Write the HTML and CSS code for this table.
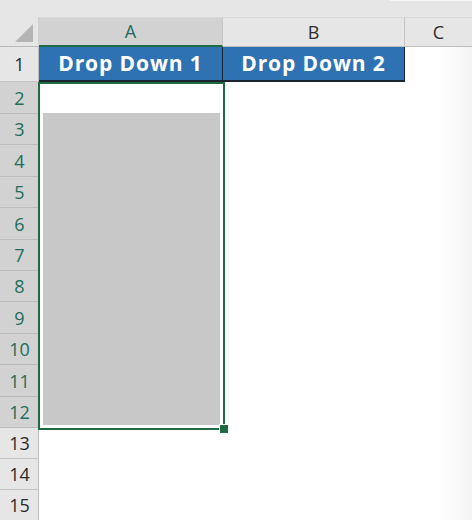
FILE: index.html
```html
<!DOCTYPE html>
<html>
<head>
<meta charset="utf-8">
<link rel="stylesheet" href="styles.css">
</head>
<body>
<div class="sheet">
  <div class="topbar"><div class="topbar-fill"></div><div class="topbar-light"></div></div>
  <div class="grid">
    <div class="corner"><span class="tri"></span></div>
    <div class="colhead sel">A</div>
    <div class="colhead">B</div>
    <div class="colhead last">C</div>

    <div class="rowhead">1</div>
    <div class="cell title">Drop Down 1</div>
    <div class="cell title">Drop Down 2</div>
    <div class="cell"></div>

    <div class="rowhead sel h32">2</div><div class="cell"></div><div class="cell"></div><div class="cell"></div>
    <div class="rowhead sel h31">3</div><div class="cell"></div><div class="cell"></div><div class="cell"></div>
    <div class="rowhead sel h32">4</div><div class="cell"></div><div class="cell"></div><div class="cell"></div>
    <div class="rowhead sel h31">5</div><div class="cell"></div><div class="cell"></div><div class="cell"></div>
    <div class="rowhead sel h32">6</div><div class="cell"></div><div class="cell"></div><div class="cell"></div>
    <div class="rowhead sel h31">7</div><div class="cell"></div><div class="cell"></div><div class="cell"></div>
    <div class="rowhead sel h31">8</div><div class="cell"></div><div class="cell"></div><div class="cell"></div>
    <div class="rowhead sel h32">9</div><div class="cell"></div><div class="cell"></div><div class="cell"></div>
    <div class="rowhead sel h31">10</div><div class="cell"></div><div class="cell"></div><div class="cell"></div>
    <div class="rowhead sel h32">11</div><div class="cell"></div><div class="cell"></div><div class="cell"></div>
    <div class="rowhead sel h31">12</div><div class="cell"></div><div class="cell"></div><div class="cell"></div>
    <div class="rowhead">13</div><div class="cell"></div><div class="cell"></div><div class="cell"></div>
    <div class="rowhead">14</div><div class="cell"></div><div class="cell"></div><div class="cell"></div>
    <div class="rowhead">15</div><div class="cell"></div><div class="cell"></div><div class="cell"></div>

    <div class="selection"><div class="list"></div><span class="handle"></span></div>
  </div>
</div>
</body>
</html>
```
FILE: styles.css
```css
* { box-sizing: border-box; }
html, body { margin: 0; padding: 0; background: #ffffff; }
.sheet {
  width: 472px;
  height: 520px;
  overflow: hidden;
  font-family: "Open Sans", "Liberation Sans", sans-serif;
  background: linear-gradient(to right, #ffffff 0, #ffffff 440px, #f3f3f3 472px);
}
.topbar { height: 17px; display: flex; background: #e6e6e6; }
.topbar-fill { flex: 1; }
.topbar-light { width: 82px; height: 1px; background: #f7f7f7; }
.grid {
  position: relative;
  display: grid;
  grid-template-columns: 39px 184px 182px 67px;
  grid-template-rows: 30px 35px repeat(11, auto) 31px 31px 31px;
}
.corner {
  background: #e6e6e6;
  border-bottom: 1px solid #b9b9b9;
  border-right: 1px solid #cfcfcf;
  position: relative;
}
.tri {
  position: absolute;
  right: 5px;
  bottom: 4px;
  width: 0;
  height: 0;
  border-left: 18px solid transparent;
  border-bottom: 18px solid #b4b4b4;
}
.colhead {
  background: #e6e6e6;
  border-bottom: 1px solid #bdbdbd;
  border-right: 1px solid #c6c6c6;
  border-top: 1px solid #dadada;
  display: flex;
  align-items: center;
  justify-content: center;
  font-size: 18px;
  color: #2e2e2e;
  padding-bottom: 1px;
}
.colhead.sel {
  background: #d2d2d2;
  border-bottom: 2px solid #1e6b41;
  color: #1d6e5a;
}
.colhead.last { border-right: none; }
.rowhead {
  background: #e6e6e6;
  border-bottom: 1px solid #c4c4c4;
  border-right: 1px solid #bdbdbd;
  display: flex;
  align-items: center;
  justify-content: center;
  font-size: 18px;
  color: #2a2a2a;
  padding-left: 1px;
}
.rowhead.sel { background: #d2d2d2; color: #1d6e5a; border-bottom-color: #bcbcbc; }
.h31 { height: 31px; }
.h32 { height: 32px; }
.cell { background: transparent; }
.cell.title {
  background: #2e72b3;
  color: #ffffff;
  font-weight: 700;
  font-size: 21px;
  letter-spacing: 0.9px;
  display: flex;
  align-items: center;
  justify-content: center;
  border-right: 1px solid #1c2430;
  border-bottom: 2px solid #1c2430;
  padding-bottom: 1px;
}
.selection {
  position: absolute;
  left: 38px;
  top: 65px;
  width: 187px;
  height: 348px;
  border: 2px solid #1e6b41;
  padding: 29px 3px 3px 3px;
}
.list { width: 100%; height: 100%; background: #c8c8c8; }
.handle {
  position: absolute;
  right: -6px;
  bottom: -6px;
  width: 10px;
  height: 10px;
  background: #1e6b41;
  border: 1px solid #ffffff;
}
```
